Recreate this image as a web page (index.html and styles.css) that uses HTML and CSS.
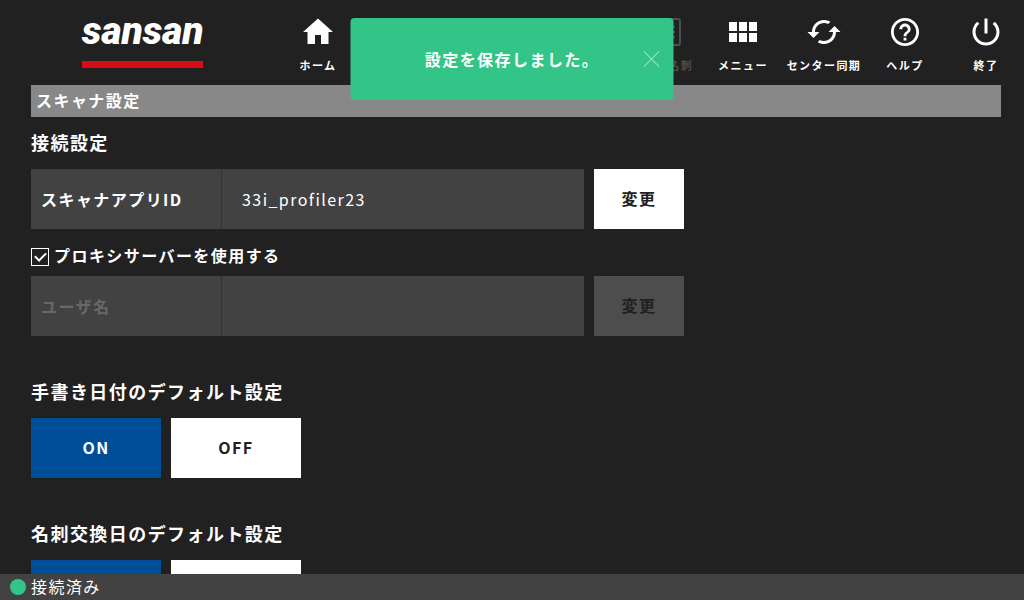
FILE: index.html
```html
<!DOCTYPE html>
<html lang="ja">
<head>
    <meta charset="UTF-8">
    <meta name="viewport" content="width=device-width, initial-scale=1.0">
    <title>スキャナ設定</title>
    <link rel="stylesheet" href="styles.css">
</head>
<body>
    <header class="header">
        <a class="logo" href="#">sansan</a>
        <nav class="nav">
            <a class="nav-item home" href="#">
                <svg viewBox="0 0 24 24"><path d="M10 20v-6h4v6h5v-8h3L12 3 2 12h3v8z"/></svg>
                <span>ホーム</span>
            </a>
            <a class="nav-item disabled" href="#">
                <svg class="wide" viewBox="0 0 40 36">
                    <rect x="2" y="5" width="36" height="26" rx="2" fill="none" stroke="currentColor" stroke-width="2"/>
                    <path d="M22 12h11v2H22zM22 17h11v2H22zM22 22h11v2H22z"/>
                </svg>
                <span>最近の名刺</span>
            </a>
            <a class="nav-item" href="#">
                <svg viewBox="0 0 36 36"><path d="M4 8h8v9H4zM14 8h8v9h-8zM24 8h8v9h-8zM4 19h8v9H4zM14 19h8v9h-8zM24 19h8v9h-8z"/></svg>
                <span>メニュー</span>
            </a>
            <a class="nav-item" href="#">
                <svg viewBox="0 0 24 24"><path d="M19 8l-4 4h3c0 3.31-2.69 6-6 6-1.01 0-1.97-.25-2.8-.7l-1.46 1.46C8.97 19.54 10.43 20 12 20c4.42 0 8-3.58 8-8h3l-4-4zM6 12c0-3.31 2.69-6 6-6 1.01 0 1.97.25 2.8.7l1.46-1.46C15.03 4.46 13.57 4 12 4c-4.42 0-8 3.58-8 8H1l4 4 4-4H6z"/></svg>
                <span>センター同期</span>
            </a>
            <a class="nav-item" href="#">
                <svg viewBox="-0.8 -0.8 25.6 25.6"><path d="M11 18h2v-2h-2v2zm1-16C6.48 2 2 6.48 2 12s4.48 10 10 10 10-4.48 10-10S17.52 2 12 2zm0 18c-4.41 0-8-3.59-8-8s3.59-8 8-8 8 3.59 8 8-3.59 8-8 8zm0-14c-2.21 0-4 1.79-4 4h2c0-1.1.9-2 2-2s2 .9 2 2c0 2-3 1.75-3 5h2c0-2.25 3-2.5 3-5 0-2.21-1.79-4-4-4z"/></svg>
                <span>ヘルプ</span>
            </a>
            <a class="nav-item" href="#">
                <svg viewBox="0 0 24 24"><path d="M13 3h-2v10h2V3zm4.83 2.17l-1.42 1.42C17.99 7.86 19 9.81 19 12c0 3.87-3.13 7-7 7s-7-3.13-7-7c0-2.19 1.01-4.14 2.58-5.42L6.17 5.17C4.23 6.82 3 9.26 3 12c0 4.97 4.03 9 9 9s9-4.03 9-9c0-2.74-1.23-5.18-3.17-6.83z"/></svg>
                <span>終了</span>
            </a>
        </nav>
    </header>

    <main class="content">
        <h1>スキャナ設定</h1>

        <section>
            <h2>接続設定</h2>
            <div class="row">
                <div class="field">
                    <label for="appId">スキャナアプリID</label>
                    <input type="text" id="appId" value="33i_profiler23" readonly>
                </div>
                <button class="change">変更</button>
            </div>
            <label class="check">
                <input type="checkbox" id="useProxy" checked>
                プロキシサーバーを使用する
            </label>
            <div class="row">
                <div class="field disabled">
                    <label for="userName">ユーザ名</label>
                    <input type="text" id="userName" disabled>
                </div>
                <button class="change" disabled>変更</button>
            </div>
        </section>

        <section>
            <h2>手書き日付のデフォルト設定</h2>
            <div class="row">
                <button class="toggle active">ON</button>
                <button class="toggle">OFF</button>
            </div>
        </section>

        <section>
            <h2>名刺交換日のデフォルト設定</h2>
            <div class="row">
                <button class="toggle active">ON</button>
                <button class="toggle">OFF</button>
            </div>
        </section>
    </main>

    <footer class="status">
        <span class="status-dot"></span>
        <span class="status-text">接続済み</span>
    </footer>

    <div class="toast" role="status">
        <p>設定を保存しました。</p>
        <button class="toast-close" aria-label="閉じる">
            <svg viewBox="0 0 16 16"><path d="M0 0l16 16M16 0L0 16"/></svg>
        </button>
    </div>
</body>
</html>
```

FILE: styles.css
```css
* {
    box-sizing: border-box;
}

body {
    display: flex;
    flex-direction: column;
    height: 100vh;
    margin: 0;
    overflow: hidden;
    background-color: #212121;
    color: #fff;
    font-family: "Noto Sans CJK JP", sans-serif;
    font-size: 16px;
    line-height: 24px;
    letter-spacing: 0.09rem;
}

button, input {
    font: inherit;
    letter-spacing: inherit;
    color: inherit;
    border: none;
    border-radius: 0;
    margin: 0;
}

button {
    padding: 0 0 2px;
    cursor: pointer;
}

a {
    color: inherit;
    text-decoration: none;
}

.header {
    display: flex;
    flex-shrink: 0;
    gap: 77px;
    height: 85px;
    padding-left: 82px;
}

.logo {
    width: 121px;
    height: 68px;
    border-bottom: 7px solid #d80c18;
    font-family: Roboto, sans-serif;
    font-size: 39px;
    font-style: italic;
    font-weight: 900;
    line-height: 62px;
    letter-spacing: normal;
    text-align: center;
}

.nav {
    display: flex;
    flex: 1;
    gap: 5px;
    padding-top: 14px;
}

.nav-item {
    display: flex;
    flex-direction: column;
    align-items: center;
    gap: 7px;
    width: 76px;
    font-size: 11px;
    font-weight: bold;
    line-height: 16px;
    white-space: nowrap;
}

.nav-item.home {
    margin-right: auto;
}

.nav-item.disabled {
    color: #4d4d4d;
}

.nav-item svg {
    width: 36px;
    height: 36px;
    fill: currentColor;
}

.nav-item svg.wide {
    width: 40px;
}

.content {
    flex: 1;
    min-height: 0;
    padding: 0 23px 0 31px;
    overflow-y: auto;
    scrollbar-width: none;
}

h1 {
    margin: 0;
    padding: 0 5px 2px;
    background-color: #888;
    font-size: 16px;
    line-height: 30px;
}

h2 {
    margin: 0;
    padding-bottom: 2px;
    font-size: 18px;
    line-height: 50px;
}

section {
    margin-bottom: 30px;
}

.row {
    display: flex;
    gap: 10px;
}

.field {
    display: flex;
    flex: 0 1 553px;
    height: 60px;
    background-color: #424242;
}

.field label {
    width: 191px;
    padding-left: 10px;
    border-right: 1px solid #333;
    font-weight: bold;
    line-height: 60px;
}

.field input {
    flex: 1;
    min-width: 0;
    padding: 0 20px;
    background: none;
    outline: none;
}

.field.disabled label {
    color: #686868;
}

.change {
    width: 90px;
    height: 60px;
    background-color: #fff;
    color: #212121;
    font-weight: bold;
}

.change:disabled {
    background-color: #4d4d4d;
    cursor: default;
}

.check {
    display: flex;
    gap: 5px;
    height: 47px;
    padding-top: 14px;
    font-weight: bold;
}

.check input {
    appearance: none;
    display: grid;
    place-items: center;
    width: 18px;
    height: 18px;
    margin-top: 5px;
    border: 1px solid #fff;
}

.check input:checked::before {
    content: "";
    width: 9px;
    height: 5px;
    margin-bottom: 4px;
    border-left: 2px solid #fff;
    border-bottom: 2px solid #fff;
    transform: rotate(-45deg);
}

.toggle {
    width: 130px;
    height: 60px;
    background-color: #fff;
    color: #212121;
    font-weight: bold;
}

.toggle.active {
    background-color: #004e98;
    color: #fff;
}

.status {
    display: flex;
    flex-shrink: 0;
    align-items: center;
    gap: 5px;
    height: 26px;
    padding-left: 10px;
    background-color: #424242;
}

.status-dot {
    width: 16px;
    height: 16px;
    border-radius: 50%;
    background-color: #32c587;
}

.status-text {
    padding-bottom: 2px;
}

.toast {
    position: absolute;
    top: 18px;
    left: 50%;
    display: flex;
    align-items: center;
    justify-content: center;
    width: 323px;
    height: 82px;
    border-radius: 4px;
    background-color: #32c587;
    font-weight: bold;
    transform: translateX(-50%);
}

.toast p {
    margin: 0;
}

.toast-close {
    position: absolute;
    top: 33px;
    right: 14px;
    width: 16px;
    height: 16px;
    padding: 0;
    background: none;
}

.toast-close svg {
    display: block;
    stroke: #fff;
    stroke-width: 1;
    opacity: 0.7;
}
```
